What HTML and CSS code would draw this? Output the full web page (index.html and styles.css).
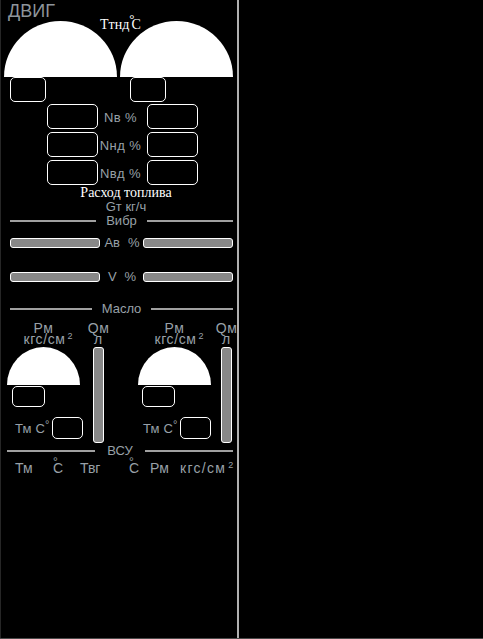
FILE: index.html
```html
<!DOCTYPE html>
<html lang="ru">
<head>
<meta charset="utf-8">
<title>ДВИГ</title>
<link rel="stylesheet" href="styles.css">
</head>
<body>
<div class="screen">
  <section class="panel">
    <div class="title">ДВИГ</div>
    <div class="domes">
      <div class="dome"></div>
      <div class="dome"></div>
      <div class="domes-label">Ттнд<span class="deg-mid">°</span>С</div>
    </div>
    <div class="small-row">
      <div class="box box-s"></div>
      <div class="box box-s"></div>
    </div>
    <div class="n-rows">
      <div class="box box-n"></div><div class="n-label">Nв %</div><div class="box box-n"></div>
      <div class="box box-n"></div><div class="n-label">Nнд %</div><div class="box box-n"></div>
      <div class="box box-n"></div><div class="n-label">Nвд %</div><div class="box box-n"></div>
    </div>
    <div class="fuel">
      <div class="fuel-title">Расход топлива</div>
      <div class="fuel-unit">Gт кг/ч</div>
    </div>
    <div class="divider"><span class="line"></span><span class="divider-text">Вибр</span><span class="line"></span></div>
    <div class="bar-row">
      <div class="hbar"></div>
      <div class="bar-label">Ав<span class="wide-gap"></span>%</div>
      <div class="hbar"></div>
    </div>
    <div class="bar-row bar-row-v">
      <div class="hbar"></div>
      <div class="bar-label">V<span class="wide-gap"></span>%</div>
      <div class="hbar"></div>
    </div>
    <div class="divider divider-oil"><span class="line"></span><span class="divider-text">Масло</span><span class="line"></span></div>
    <div class="oil">
      <div class="oil-group">
        <div class="gauge-col">
          <div class="oil-label">Рм<br><span class="unit-line">кгс/см<sup class="sq">2</sup></span></div>
          <div class="dome-s"></div>
          <div class="box box-o"></div>
          <div class="tm-row"><span class="tm-text">Тм С<span class="sup-deg">°</span></span><div class="box box-t"></div></div>
        </div>
        <div class="q-col">
          <div class="oil-label">Qм<br>л</div>
          <div class="vbar"></div>
        </div>
      </div>
      <div class="oil-group oil-group-r">
        <div class="gauge-col">
          <div class="oil-label">Рм<br><span class="unit-line">кгс/см<sup class="sq">2</sup></span></div>
          <div class="dome-s"></div>
          <div class="box box-o box-o-r"></div>
          <div class="tm-row tm-row-r"><span class="tm-text">Тм С<span class="sup-deg">°</span></span><div class="box box-t"></div></div>
        </div>
        <div class="q-col">
          <div class="oil-label">Qм<br>л</div>
          <div class="vbar"></div>
        </div>
      </div>
    </div>
    <div class="divider divider-vsu"><span class="line"></span><span class="divider-text">ВСУ</span><span class="line"></span></div>
    <div class="vsu-row">
      <span>Тм</span>
      <span class="dc"><span class="deg-over">°</span>С</span>
      <span>Твг</span>
      <span class="dc"><span class="deg-over">°</span>С</span>
      <span>Рм</span>
      <span class="unit-wide">кгс/см<sup class="sq">2</sup></span>
    </div>
  </section>
  <section class="main"></section>
</div>
</body>
</html>
```

FILE: styles.css
```css
html, body {
  margin: 0;
  padding: 0;
  background: #000;
}

body {
  font-family: "Liberation Sans", Arial, sans-serif;
  color: #98a0a8;
}

.screen {
  display: flex;
  height: 638px;
  border-bottom: 1px solid #4a4a4a;
}

.panel {
  width: 236px;
  flex-shrink: 0;
  border-left: 1px solid #262626;
  border-right: 2px solid #b0b0b0;
  display: flex;
  flex-direction: column;
}

.main {
  flex: 1;
}

.title {
  padding: 2px 0 0 7px;
  font-size: 18px;
  line-height: 19px;
  color: #8e959b;
}

.domes {
  position: relative;
  display: flex;
  gap: 3px;
  padding-left: 3px;
}

.dome {
  width: 113px;
  height: 56px;
  background: #fff;
  border-radius: 56.5px 56.5px 0 0 / 56px 56px 0 0;
}

.domes-label {
  position: absolute;
  left: 99px;
  top: -3px;
  font-family: "Liberation Serif", "Times New Roman", serif;
  font-size: 14px;
  line-height: 14px;
  color: #fff;
}

.deg-mid {
  position: relative;
  top: -6px;
  margin-right: -3px;
  font-size: 13px;
}

.box {
  box-sizing: border-box;
  border: 1px solid #fff;
  border-radius: 5px;
  flex-shrink: 0;
}

.small-row {
  display: flex;
  gap: 84px;
  padding-left: 9px;
}

.box-s {
  width: 36px;
  height: 25px;
}

.n-rows {
  display: grid;
  grid-template-columns: 51px 49px 51px;
  grid-auto-rows: 25px;
  row-gap: 3px;
  padding-left: 46px;
  margin-top: 2px;
}

.n-label {
  font-size: 13px;
  line-height: 25px;
  text-align: center;
  letter-spacing: 0.4px;
  white-space: nowrap;
  padding: 1px 4px 0 0;
}

.fuel {
  margin-top: 1px;
  padding-left: 14px;
  text-align: center;
  line-height: 14px;
}

.fuel-title {
  font-family: "Liberation Serif", "Times New Roman", serif;
  font-size: 14px;
  color: #fff;
}

.fuel-unit {
  font-size: 13px;
}

.divider {
  display: flex;
  align-items: center;
  gap: 10px;
  height: 14px;
  padding: 0 4px 0 9px;
  font-size: 13px;
  line-height: 14px;
}

.line {
  flex: 1;
  height: 2px;
  background: #a0a0a0;
}

.divider-oil {
  margin-top: 18px;
}

.divider-vsu {
  margin-top: 1px;
  gap: 12px;
  padding-left: 6px;
}

.bar-row {
  display: grid;
  grid-template-columns: 90px 43px 90px;
  align-items: center;
  height: 14px;
  padding-left: 9px;
  margin-top: 8px;
}

.bar-row-v {
  margin-top: 20px;
}

.hbar {
  box-sizing: border-box;
  height: 10px;
  background: #888;
  border: 1px solid #fff;
  border-radius: 3px;
}

.bar-label {
  font-size: 13px;
  line-height: 14px;
  text-align: center;
  padding-left: 1px;
}

.wide-gap {
  display: inline-block;
  width: 8px;
}

.oil {
  display: flex;
  gap: 34px;
  padding-left: 6px;
  margin-top: 7px;
}

.oil-group {
  display: flex;
  gap: 13px;
}

.oil-group-r {
  gap: 10px;
}

.gauge-col {
  width: 73px;
  display: flex;
  flex-direction: column;
}

.oil-label {
  font-size: 14px;
  line-height: 11px;
  letter-spacing: 0.6px;
  text-align: center;
  white-space: nowrap;
}

.unit-line {
  padding-left: 9px;
}

.sq {
  font-size: 9px;
  line-height: 0;
  vertical-align: 5px;
  margin-left: 2px;
  letter-spacing: 0;
}

.dome-s {
  width: 73px;
  height: 38px;
  margin-top: 2px;
  background: #fff;
  border-radius: 36.5px 36.5px 0 0 / 38px 38px 0 0;
}

.box-o {
  width: 33px;
  height: 21px;
  margin: 1px 0 0 5px;
}

.box-o-r {
  margin-left: 4px;
}

.tm-row {
  display: flex;
  align-items: center;
  gap: 2px;
  margin: 10px 0 0 8px;
  white-space: nowrap;
}

.tm-row-r {
  margin-left: 5px;
}

.tm-text {
  font-size: 13px;
  line-height: 14px;
  letter-spacing: 0.2px;
  padding-top: 2px;
}

.sup-deg {
  position: relative;
  top: -5px;
  font-size: 11px;
}

.box-t {
  width: 31px;
  height: 22px;
}

.q-col {
  width: 11px;
  display: flex;
  flex-direction: column;
  align-items: center;
}

.vbar {
  box-sizing: border-box;
  width: 11px;
  height: 96px;
  margin-top: 2px;
  background: #888;
  border: 1px solid #fff;
  border-radius: 3px;
}

.vsu-row {
  display: grid;
  grid-template-columns: 38px 27px 49px 21px 30px auto;
  padding-left: 14px;
  margin-top: 2px;
  font-size: 14px;
  line-height: 16px;
  white-space: nowrap;
}

.unit-wide {
  letter-spacing: 1.3px;
}

.dc {
  position: relative;
}

.deg-over {
  position: absolute;
  left: 0;
  top: -6px;
  font-size: 12px;
}
```
